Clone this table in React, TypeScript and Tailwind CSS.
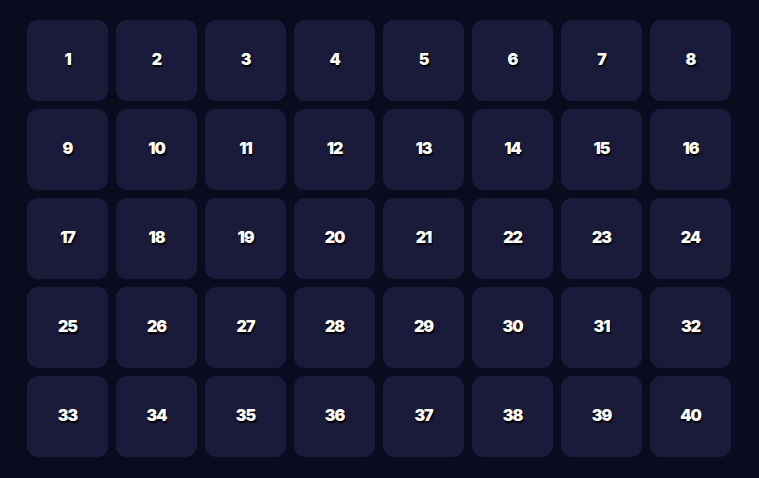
import React from "react";

const cells = Array.from({ length: 40 }, (_, i) => i + 1);

export default function App() {
  return (
    <div className="min-h-screen w-full bg-[#0a0b1e] pt-[20px] pb-[21px] pl-[27px] pr-[28px]">
      <div className="grid grid-cols-[repeat(8,81px)] auto-rows-[81px] gap-[8px]">
        {cells.map((n) => (
          <div
            key={n}
            className="flex items-center justify-center rounded-[11px] bg-[#1a1a3a] pb-[3px]"
          >
            <span className="font-['Inter',sans-serif] text-[16px] font-black tracking-[-1px] text-white [text-shadow:1px_2px_1px_#000,0_1px_0_#05050f]">
              {n}
            </span>
          </div>
        ))}
      </div>
    </div>
  );
}
